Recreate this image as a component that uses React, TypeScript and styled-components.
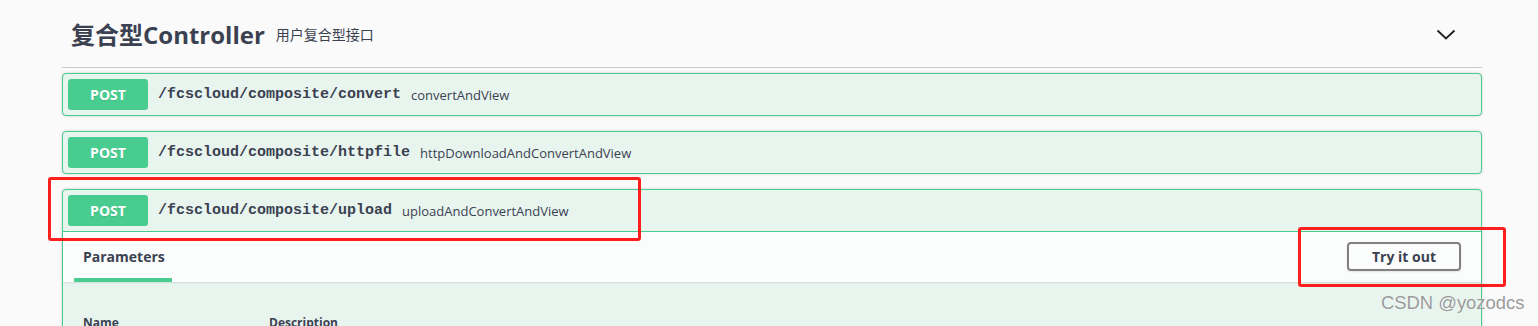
import React from "react";
import styled, { createGlobalStyle } from "styled-components";

const GlobalStyle = createGlobalStyle`
  html, body {
    margin: 0;
    padding: 0;
    background: #fafafa;
    font-family: "Open Sans", "Noto Sans CJK SC", sans-serif;
    color: #3b4151;
  }
`;

const Page = styled.div`
  position: relative;
  width: 1538px;
  height: 326px;
  overflow: hidden;
  padding: 0 56px 0 62px;
  box-sizing: border-box;
`;

const TagHeader = styled.div`
  display: flex;
  align-items: center;
  height: 67px;
  padding: 0 26px 0 9px;
  border-bottom: 1px solid #c8c9cc;
  margin-bottom: 5px;
`;

const TagTitle = styled.h4`
  margin: 0;
  font-size: 24px;
  font-weight: 700;
  color: #3b4151;
  font-family: "Open Sans", "Noto Sans CJK SC", sans-serif;
`;

const TagDesc = styled.small`
  margin-left: 11px;
  font-size: 14px;
  font-weight: 400;
  color: #3b4151;
  flex: 1;
  padding-top: 1px;
`;

const Chevron = styled.svg`
  width: 20px;
  height: 12px;
  margin-top: 2px;
`;

const OpBlock = styled.div`
  border: 1px solid #49cc90;
  background: #e8f5ef;
  border-radius: 4px;
  box-shadow: 0 0 3px rgba(0, 0, 0, 0.19);
  margin-bottom: 15px;
`;

const Summary = styled.div<{ open?: boolean }>`
  display: flex;
  align-items: center;
  padding: 5px;
  border-bottom: ${({ open }) => (open ? "1px solid #49cc90" : "none")};
`;

const Method = styled.span`
  display: inline-block;
  min-width: 80px;
  box-sizing: border-box;
  padding: 6px 0;
  line-height: 19px;
  text-align: center;
  background: #49cc90;
  color: #fff;
  border-radius: 3px;
  font-size: 14px;
  font-weight: 700;
  text-shadow: 0 1px 0 rgba(0, 0, 0, 0.1);
`;

const Path = styled.span`
  padding: 0 10px;
  font-family: "Liberation Mono", monospace;
  font-size: 15px;
  font-weight: 700;
  color: #3b4151;
`;

const Description = styled.span`
  font-size: 13px;
  color: #3b4151;
`;

const SectionHeader = styled.div`
  display: flex;
  align-items: stretch;
  justify-content: space-between;
  height: 50px;
  padding: 0 20px 0 11px;
  background: rgba(255, 255, 255, 0.8);
  box-shadow: 0 1px 2px rgba(0, 0, 0, 0.1);
`;

const Tab = styled.div<{ active?: boolean }>`
  display: flex;
  align-items: center;
  padding: 3px 7px 0 9px;
  font-size: 14px;
  font-weight: 700;
  border-bottom: 4px solid ${({ active }) => (active ? "#49cc90" : "transparent")};
`;

const TryButton = styled.button`
  align-self: center;
  width: 114px;
  height: 29px;
  margin-top: -2px;
  background: transparent;
  border: 2px solid #808080;
  border-radius: 4px;
  font-family: "Open Sans", sans-serif;
  font-size: 14px;
  font-weight: 700;
  color: #3b4151;
  box-shadow: 0 1px 2px rgba(0, 0, 0, 0.1);
`;

const ParamTable = styled.div`
  display: grid;
  grid-template-columns: 186px 1fr;
  padding: 32px 20px 0 20px;
`;

const ColHead = styled.div`
  font-size: 12px;
  font-weight: 700;
`;

const Annotation = styled.div<{ x: number; y: number; w: number; h: number }>`
  position: absolute;
  left: ${({ x }) => x}px;
  top: ${({ y }) => y}px;
  width: ${({ w }) => w}px;
  height: ${({ h }) => h}px;
  border: 3px solid #ff1e1e;
  border-radius: 3px;
  box-sizing: border-box;
  pointer-events: none;
`;

const Watermark = styled.div`
  position: absolute;
  left: 1381px;
  top: 292px;
  font-family: "Liberation Sans", Arial, sans-serif;
  font-size: 18.4px;
  color: #9a9a9a;
  text-shadow: 0 0 1px #fff;
`;

const ops = [
  { path: "/fcscloud/composite/convert", desc: "convertAndView" },
  { path: "/fcscloud/composite/httpfile", desc: "httpDownloadAndConvertAndView" },
];

export default function App() {
  return (
    <>
      <GlobalStyle />
      <Page>
        <TagHeader>
          <TagTitle>复合型Controller</TagTitle>
          <TagDesc>用户复合型接口</TagDesc>
          <Chevron viewBox="0 0 20 12">
            <polyline points="1.5,1.5 10,9.5 18.5,1.5" fill="none" stroke="#1f1f1f" strokeWidth="1.8" />
          </Chevron>
        </TagHeader>

        {ops.map((op) => (
          <OpBlock key={op.path}>
            <Summary>
              <Method>POST</Method>
              <Path>{op.path}</Path>
              <Description>{op.desc}</Description>
            </Summary>
          </OpBlock>
        ))}

        <OpBlock>
          <Summary open>
            <Method>POST</Method>
            <Path>/fcscloud/composite/upload</Path>
            <Description>uploadAndConvertAndView</Description>
          </Summary>
          <SectionHeader>
            <Tab active>Parameters</Tab>
            <TryButton>Try it out</TryButton>
          </SectionHeader>
          <ParamTable>
            <ColHead>Name</ColHead>
            <ColHead>Description</ColHead>
          </ParamTable>
        </OpBlock>

        <Annotation x={48} y={177} w={593} h={64} />
        <Annotation x={1298} y={227} w={208} h={60} />
        <Watermark>CSDN @yozodcs</Watermark>
      </Page>
    </>
  );
}
